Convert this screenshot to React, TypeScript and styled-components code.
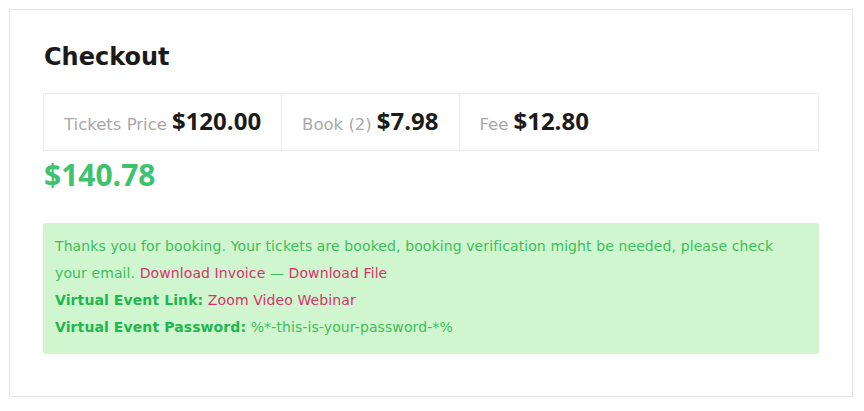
import React from "react";
import styled, { createGlobalStyle } from "styled-components";

const Global = createGlobalStyle`
  html, body { margin: 0; padding: 0; background: #ffffff; }
  body { font-family: "DejaVu Sans", "Open Sans", sans-serif; }
`;

const Page = styled.div`
  padding: 9px 11px 0 9px;
`;

const Card = styled.section`
  border: 1px solid #e6e6e6;
  padding: 31px 33px 44px 33px;
  height: 388px;
  box-sizing: border-box;
`;

const Title = styled.h2`
  margin: 0 0 20px 1px;
  font-family: "DejaVu Sans", sans-serif;
  font-weight: 700;
  font-size: 24px;
  line-height: 32px;
  color: #1b1b1b;
`;

const PriceTable = styled.div`
  display: flex;
  border: 1px solid #ebebeb;
  height: 58px;
  box-sizing: border-box;
`;

const PriceCell = styled.div<{ $grow?: boolean }>`
  display: flex;
  align-items: baseline;
  gap: 5px;
  padding: 10px 20px 0 20px;
  border-right: ${(p) => (p.$grow ? "none" : "1px solid #ebebeb")};
  flex: ${(p) => (p.$grow ? "1" : "none")};
`;

const Label = styled.span`
  font-family: "DejaVu Sans", sans-serif;
  font-size: 16.5px;
  color: #a8a8a8;
`;

const Value = styled.span`
  font-family: "Open Sans", sans-serif;
  font-size: 24px;
  font-weight: 700;
  color: #1b1b1b;
`;

const Total = styled.div`
  margin: 4px 0 0 1px;
  font-family: "Open Sans", sans-serif;
  font-size: 30px;
  font-weight: 700;
  line-height: 40px;
  color: #3ec26d;
`;

const Notice = styled.div`
  margin-top: 28px;
  background: #cff6cf;
  border-radius: 3px;
  padding: 10px 20px 13px 12px;
  font-family: "DejaVu Sans", sans-serif;
  font-size: 14px;
  letter-spacing: 0.1px;
  line-height: 27px;
  color: #3ebe5a;
`;

const Line = styled.div``;

const Link = styled.a`
  color: #d6336c;
  text-decoration: none;
`;

const Strong = styled.strong`
  color: #1fb64e;
  font-weight: 700;
`;

export default function App() {
  return (
    <>
      <Global />
      <Page>
        <Card>
          <Title>Checkout</Title>
          <PriceTable>
            <PriceCell>
              <Label>Tickets Price</Label>
              <Value>$120.00</Value>
            </PriceCell>
            <PriceCell>
              <Label>Book (2)</Label>
              <Value>$7.98</Value>
            </PriceCell>
            <PriceCell $grow>
              <Label>Fee</Label>
              <Value>$12.80</Value>
            </PriceCell>
          </PriceTable>
          <Total>$140.78</Total>
          <Notice>
            <Line>
              Thanks you for booking. Your tickets are booked, booking verification might be needed, please check your email.{" "}
              <Link href="#">Download Invoice</Link> — <Link href="#">Download File</Link>
            </Line>
            <Line>
              <Strong>Virtual Event Link:</Strong> <Link href="#">Zoom Video Webinar</Link>
            </Line>
            <Line>
              <Strong>Virtual Event Password:</Strong> %*-this-is-your-password-*%
            </Line>
          </Notice>
        </Card>
      </Page>
    </>
  );
}
